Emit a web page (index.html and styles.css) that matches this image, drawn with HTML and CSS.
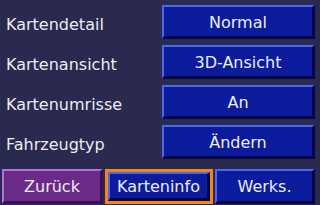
FILE: index.html
```html
<!DOCTYPE html>
<html>
<head>
<meta charset="utf-8">
<link rel="stylesheet" href="styles.css">
</head>
<body>
<div class="screen">
  <div class="settings">
    <div class="label">Kartendetail</div><div class="btn blue">Normal</div>
    <div class="label">Kartenansicht</div><div class="btn blue">3D-Ansicht</div>
    <div class="label">Kartenumrisse</div><div class="btn blue">An</div>
    <div class="label">Fahrzeugtyp</div><div class="btn blue">Ändern</div>
  </div>
  <div class="bottom">
    <div class="btn purple">Zurück</div>
    <div class="focus"><div class="btn blue">Karteninfo</div></div>
    <div class="btn blue">Werks.</div>
  </div>
</div>
</body>
</html>
```

FILE: styles.css
```css
html, body {
  margin: 0;
  padding: 0;
  background: #2a2950;
}
.screen {
  width: 320px;
  height: 205px;
  box-sizing: border-box;
  padding: 5px 5px 1px 2px;
  display: flex;
  flex-direction: column;
  font-family: "DejaVu Sans", sans-serif;
  font-size: 16px;
  color: #ececf4;
}
.settings {
  display: grid;
  grid-template-columns: 1fr 153px;
  grid-auto-rows: 34px;
  row-gap: 6px;
}
.label {
  display: flex;
  align-items: center;
  padding-left: 4px;
  padding-top: 5px;
}
.btn {
  box-sizing: border-box;
  display: flex;
  align-items: center;
  justify-content: center;
  border: 3px solid;
  line-height: 1;
  padding-top: 2px;
}
.blue {
  background: #0a1c9c;
  border-color: #4e66e8 #04063e #04063e #4e66e8;
  border-left-width: 2px;
  border-top-width: 2px;
}
.purple {
  background: #6c2a88;
  border-color: #b172d6 #3a104f #3a104f #b172d6;
  border-left-width: 2px;
  border-top-width: 2px;
}
.bottom {
  margin-top: 10px;
  display: flex;
  height: 35px;
  gap: 2px;
}
.bottom > .btn {
  width: 100px;
}
.bottom > .purple {
  width: 101px;
}
.focus {
  width: 108px;
  box-sizing: border-box;
  border: 3px solid #f4841e;
  display: flex;
}
.focus .btn {
  flex: 1;
}
```
